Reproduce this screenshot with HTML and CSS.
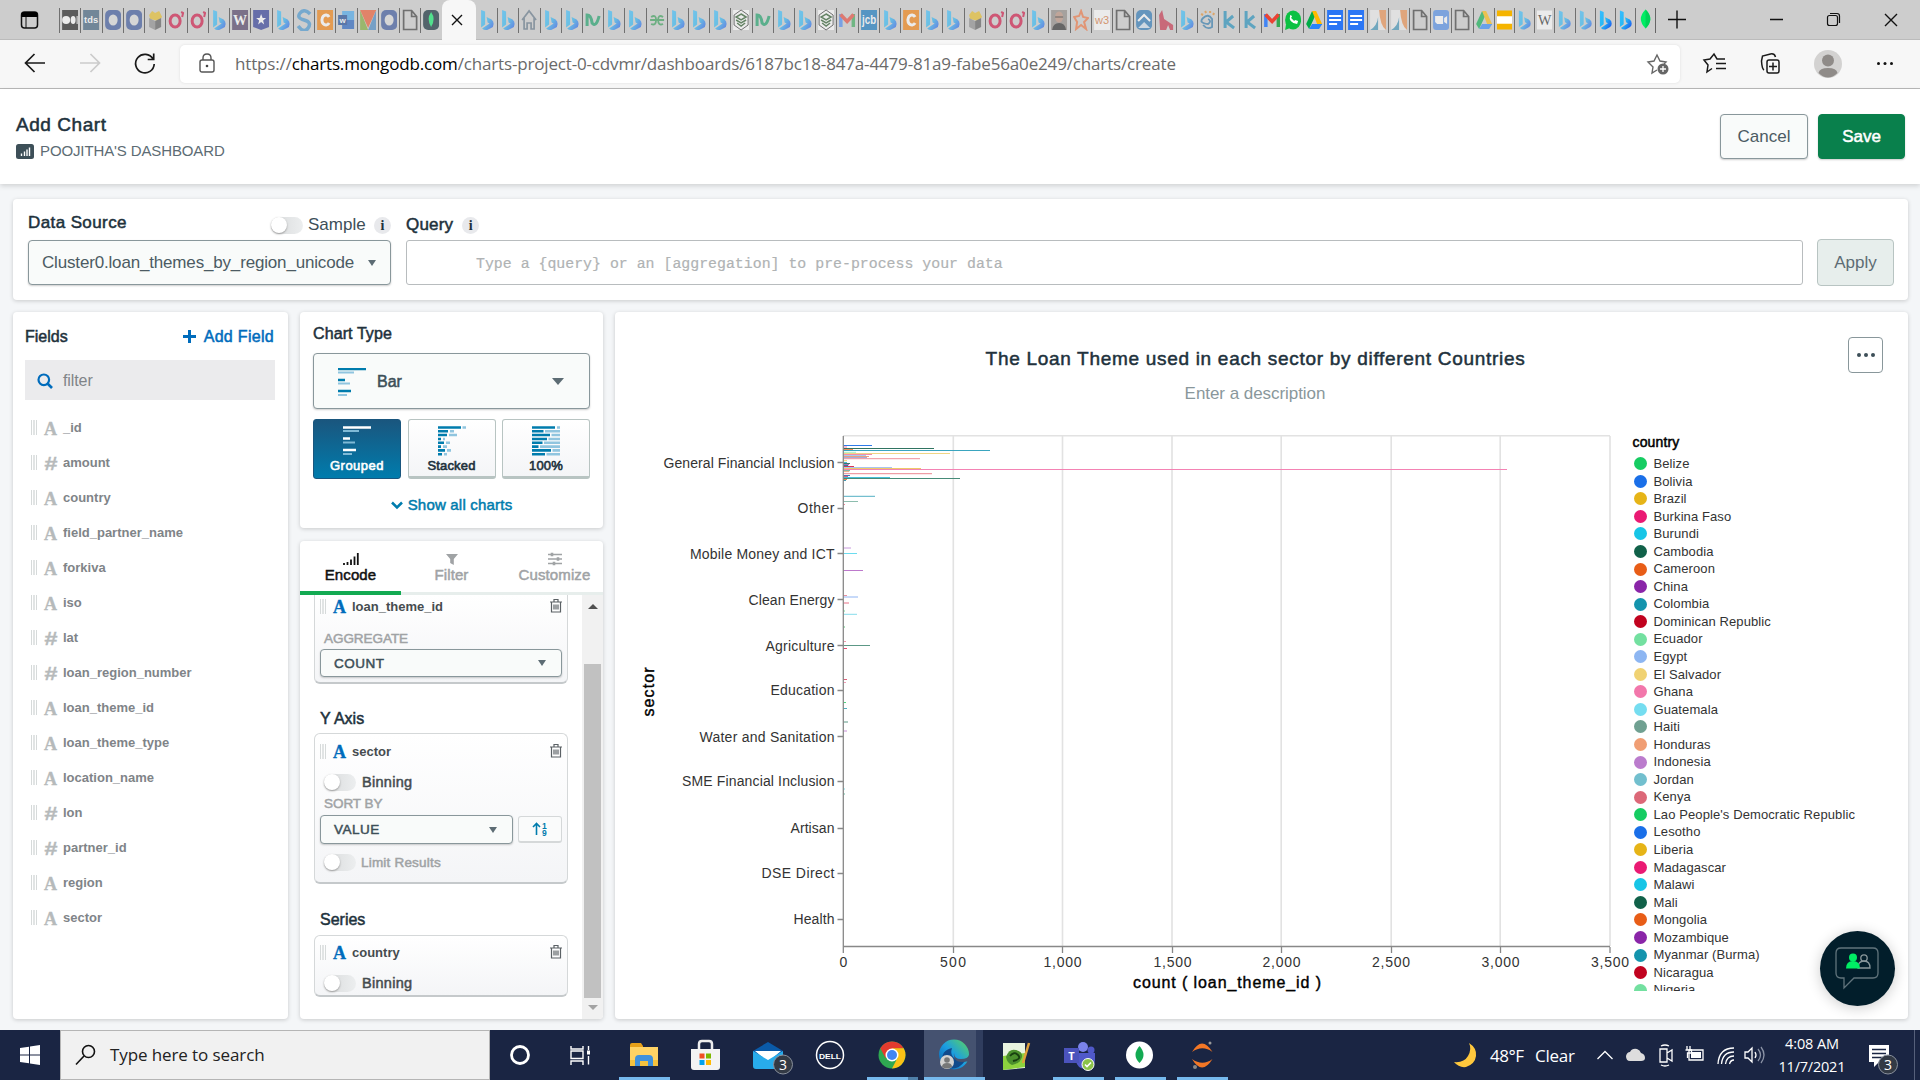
FILE: index.html
```html
<!DOCTYPE html>
<html lang="en">
<head>
<meta charset="utf-8">
<title>Add Chart</title>
<link rel="stylesheet" href="styles.css">
</head>
<body>
<svg class="defs" width="0" height="0">
  <defs>
    <linearGradient id="gb" x1="0" y1="0" x2="1" y2="1"><stop offset="0" stop-color="#37bdff"/><stop offset=".5" stop-color="#26b8f4"/><stop offset="1" stop-color="#1b48ef"/></linearGradient>
    <linearGradient id="ge" x1="0" y1="1" x2="1" y2="0"><stop offset="0" stop-color="#0c59a4"/><stop offset=".5" stop-color="#1b9de2"/><stop offset="1" stop-color="#5fd65a"/></linearGradient>
  </defs>
</svg>
<svg class="symbols" width="0" height="0">
  <symbol id="bing" viewBox="0 0 16 22"><path fill="url(#gb)" d="M2 1l4 1.500v13l-4 3zM7.500 8l5 2.500q2 1.500 2 4.500t-2.500 4l-4 2q-3 .5-5-1.500l7.500-5-2-1z"/></symbol>
  <symbol id="med" viewBox="0 0 16 22"><path fill="#111" d="M0 1h16v20H0z"/><circle cx="4" cy="11" r="4" fill="#fff"/><ellipse cx="11" cy="11" rx="2.500" ry="4" fill="#fff"/><path d="M15 7v8" stroke="#fff"/></symbol>
  <symbol id="oo" viewBox="0 0 16 22"><rect y="1" width="16" height="20" rx="5" fill="#2f4c97"/><ellipse cx="8" cy="11" rx="4.500" ry="5.500" fill="#ddd"/></symbol>
  <symbol id="box" viewBox="0 0 16 22"><path fill="#e8bd20" d="M2 6l3-4 3 2 4-2 3 6-4 4-8-2z"/><path fill="#888" d="M2 9l6 3v9l-6-3z"/><path fill="#555" d="M14 9l-6 3v9l6-3z"/></symbol>
  <symbol id="gg" viewBox="0 0 16 22"><ellipse cx="7" cy="12" rx="5" ry="6" fill="none" stroke="#cf0a3c" stroke-width="3"/><path d="M13 3l2 1-1 4" stroke="#cf0a3c" stroke-width="2" fill="none"/></symbol>
  <symbol id="star" viewBox="0 0 16 22"><path fill="#233092" d="M0 1h16v17l-8 3-8-3z"/><path fill="#fff" d="M8 5l1.500 4H13l-3 2.500 1 4-3-2.500-3 2.500 1-4L3 9h3.500z"/></symbol>
  <symbol id="ss" viewBox="0 0 16 22"><path d="M14 5Q8-1 4 4t4 7 4 8-10-2" fill="none" stroke="#3d92cf" stroke-width="3.500"/></symbol>
  <symbol id="cc" viewBox="0 0 16 22"><path fill="#f47a00" d="M0 1h16v20H0z"/><path d="M12 8a4 5 0 1 0 0 6" fill="none" stroke="#fff" stroke-width="3"/></symbol>
  <symbol id="tri" viewBox="0 0 16 22"><path fill="#79a92f" d="M0 1v20h8z"/><path fill="#3d83c2" d="M16 1v20H8z"/><path fill="#ef5327" d="M0 1h16L8 19z"/></symbol>
  <symbol id="doc" viewBox="0 0 16 22"><path d="M1.500 1.500h8l5 6v13h-13zM9.500 1.500v6h5" fill="none" stroke="#333" stroke-width="1.700"/></symbol>
  <symbol id="mdark" viewBox="0 0 16 22"><rect y="1" width="16" height="20" rx="5" fill="#021e2b"/><path d="M8 3q5 7 0 15-5-8 0-15z" fill="#00ed64"/></symbol>
  <symbol id="leaf" viewBox="0 0 16 22"><path d="M8 0q10 10 0 20-10-10 0-20z" fill="#00ed64"/><path d="M8 0q10 10 0 20z" fill="#00d157"/></symbol>
  <symbol id="home" viewBox="0 0 16 22"><path d="M1 11l7-9 7 9M3 9v11h3v-6h4v6h3V9" fill="none" stroke="#5b7083" stroke-width="1.700"/></symbol>
  <symbol id="nn" viewBox="0 0 16 22"><path d="M2 17V6q4 0 5 8 4 5 7-7" fill="none" stroke="#109c62" stroke-width="3"/></symbol>
  <symbol id="gfg" viewBox="0 0 16 22"><path d="M1 11h14M2 8q5-3 5 3t-5 4M14 8q-5-3-5 3t5 4" fill="none" stroke="#2f9c51" stroke-width="1.800"/></symbol>
  <symbol id="hex" viewBox="0 0 16 22"><path fill="#fff" d="M0 1h16v20H0z"/><path d="M8 1l7 5v10l-7 5-7-5V6z" fill="none" stroke="#333"/><path d="M8 5l5 3-5 3-5-3zM3 11l5 3 5-3M4 14l4 3 4-3" fill="none" stroke="#252" stroke-width="1.500"/></symbol>
  <symbol id="gmail" viewBox="0 0 16 22"><path fill="#4285f4" d="M0 5h3.500v13H0z"/><path fill="#34a853" d="M12.500 5H16v13h-3.500z"/><path d="M1.500 5.500l6.500 7 6.500-7" fill="none" stroke="#ea4335" stroke-width="3.500"/></symbol>
  <symbol id="man" viewBox="0 0 16 22"><path fill="#8b8580" d="M0 1h16v20H0z"/><path fill="#222" d="M1 21q1-7 7-7t7 7z"/><ellipse cx="8" cy="8" rx="4" ry="5.500" fill="#b98c78"/><path d="M4 8h8" stroke="#222"/></symbol>
  <symbol id="ost" viewBox="0 0 16 22"><path d="M8 2l2 6 5 1-4 4 2 7-5-4-5 4 1-7-3-5 5-1z" fill="none" stroke="#ef713b" stroke-width="2"/></symbol>
  <symbol id="mtn" viewBox="0 0 16 22"><rect y="1" width="16" height="20" rx="5" fill="#1f70b4"/><path d="M2 12l6-6 6 6" fill="none" stroke="#fff" stroke-width="2"/><path d="M2 19l6-6 6 6" fill="#cfe0ef"/></symbol>
  <symbol id="hh" viewBox="0 0 16 22"><path fill="#c62742" d="M1 6l3-5 2 9 9 6v5h-3l-2-5-2 5H2z"/></symbol>
  <symbol id="spi" viewBox="0 0 16 22"><path d="M3 16q4 5 9 2V10q-4-6-9-1t5 6q4-3 0-5" fill="none" stroke="#2674a9" stroke-width="1.800"/><path d="M1 5l2 1M5 2l1 2M10 2v2M14 4l-1 2" stroke="#e58b26" stroke-width="2"/></symbol>
  <symbol id="kk" viewBox="0 0 16 22"><path d="M4 2v17M12 7l-7 6 8 6" fill="none" stroke="#158ab8" stroke-width="3"/></symbol>
  <symbol id="wa" viewBox="0 0 16 22"><ellipse cx="8" cy="11" rx="8" ry="9.500" fill="#0cc143"/><path d="M0 21l1-6 4 4z" fill="#0cc143"/><path d="M5 6q-2 8 7 9l1-3-3-1-1 1-3-3 1-2z" fill="#fff"/></symbol>
  <symbol id="drive" viewBox="0 0 16 22"><path fill="#00ac47" d="M6 2L0 15l3 5L9 7z"/><path fill="#ffba00" d="M6 2h4l6 13h-5z"/><path fill="#2684fc" d="M3 20l3-5h10l-3 5z"/></symbol>
  <symbol id="docs" viewBox="0 0 16 22"><path fill="#2b76f5" d="M0 1h16v20H0z"/><path d="M2 7h12M2 11h12M2 15h8" stroke="#fff" stroke-width="2"/></symbol>
  <symbol id="sail" viewBox="0 0 16 22"><path fill="#eee" d="M0 1h16v20H0z"/><path fill="#ec8c48" d="M9 1h7v20q-6-4-7-20z"/><path fill="#358fb5" d="M0 21q7-4 8-13v13z"/></symbol>
  <symbol id="zoom" viewBox="0 0 16 22"><rect y="1" width="16" height="20" rx="3" fill="#4788e8"/><path fill="#fff" d="M2 7h8v8H4l-2-2zM11 9l3-2v8l-3-2z"/></symbol>
  <symbol id="slides" viewBox="0 0 16 22"><path fill="#f5b400" d="M0 1h16v20H0z"/><path fill="#fff" d="M0 7h16v8H0z"/></symbol>
  <symbol id="trash" viewBox="0 0 12 14"><path d="M0 3h12M4 2.500v-2h4v2M1.500 3v10h9V3M4 5.500v5M6 5.500v5M8 5.500v5" fill="none" stroke="#5b6165" stroke-width="1.200"/></symbol>
</svg>

<div class="tabstrip">
  <div class="workspaces"><svg width="20" height="20" viewBox="0 0 20 20"><rect x="1.500" y="2" width="16" height="16" rx="3" fill="none" stroke="#111" stroke-width="1.500"/><path d="M1.500 7V4q0-2 2-2h12q2 0 2 2v3z" fill="#000"/><path d="M6 7v11" stroke="#111"/></svg></div>
  <div class="tabs first">
    <svg><use href="#med"/></svg><svg viewBox="0 0 16 22"><path fill="#355876" d="M0 1h16v20H0z"/><text x="8" y="14" class="fav" font-size="9" textLength="14" lengthAdjust="spacingAndGlyphs">tds</text></svg><svg><use href="#oo"/></svg><svg><use href="#oo"/></svg><svg><use href="#box"/></svg><svg><use href="#gg"/></svg><svg><use href="#gg"/></svg><svg><use href="#bing"/></svg><svg viewBox="0 0 16 22"><path fill="#45345c" d="M0 1h16v20H0z"/><text x="8" y="16" class="fav serif" font-size="15" textLength="14" lengthAdjust="spacingAndGlyphs">W</text></svg><svg><use href="#star"/></svg><svg><use href="#bing"/></svg><svg><use href="#ss"/></svg><svg><use href="#cc"/></svg><svg viewBox="0 0 16 22"><path fill="#41a5ee" d="M4 2h12v9H4z"/><path fill="#185abd" d="M4 11h12v9H4z"/><path fill="#103f91" d="M0 6h9v10H0z"/><text x="4.500" y="14" class="fav" font-size="8">w</text></svg><svg><use href="#tri"/></svg><svg><use href="#oo"/></svg><svg><use href="#doc"/></svg><svg><use href="#mdark"/></svg>
  </div>
  <div class="active-tab"><svg width="12" height="12" viewBox="0 0 12 12"><path d="M1 1l10 10M11 1L1 11" stroke="#111" stroke-width="1.400"/></svg></div>
  <div class="tabs mid">
    <svg><use href="#bing"/></svg><svg><use href="#bing"/></svg><svg><use href="#home"/></svg><svg><use href="#bing"/></svg><svg><use href="#bing"/></svg><svg><use href="#nn"/></svg><svg><use href="#bing"/></svg><svg><use href="#bing"/></svg><svg><use href="#gfg"/></svg><svg><use href="#bing"/></svg><svg><use href="#bing"/></svg><svg><use href="#bing"/></svg><svg><use href="#hex"/></svg><svg><use href="#nn"/></svg><svg><use href="#bing"/></svg><svg><use href="#bing"/></svg><svg><use href="#hex"/></svg><svg><use href="#gmail"/></svg><svg viewBox="0 0 16 22"><path fill="#0670bd" d="M0 1h16v20H0z"/><text x="8" y="15" class="fav" font-size="12" textLength="14" lengthAdjust="spacingAndGlyphs">jcb</text></svg><svg><use href="#bing"/></svg><svg><use href="#cc"/></svg><svg><use href="#bing"/></svg><svg><use href="#bing"/></svg><svg><use href="#box"/></svg><svg><use href="#gg"/></svg><svg><use href="#gg"/></svg><svg><use href="#bing"/></svg><svg><use href="#man"/></svg><svg><use href="#ost"/></svg><svg viewBox="0 0 16 22"><path fill="#fff" d="M0 1h16v20H0z"/><text x="8" y="15" font-size="11" text-anchor="middle" fill="#d77132">w3</text></svg><svg><use href="#doc"/></svg><svg><use href="#mtn"/></svg><svg><use href="#hh"/></svg><svg><use href="#bing"/></svg><svg><use href="#spi"/></svg><svg><use href="#kk"/></svg><svg><use href="#kk"/></svg><svg class="live"><use href="#gmail"/></svg><svg class="live"><use href="#wa"/></svg><svg class="live"><use href="#drive"/></svg><svg class="live"><use href="#docs"/></svg><svg class="live"><use href="#docs"/></svg><svg><use href="#sail"/></svg><svg><use href="#sail"/></svg><svg><use href="#doc"/></svg><svg><use href="#zoom"/></svg><svg><use href="#doc"/></svg><svg><use href="#drive"/></svg>
  </div>
  <div class="tabs last">
    <svg class="live"><use href="#slides"/></svg><svg><use href="#bing"/></svg><svg viewBox="0 0 16 22"><path fill="#fff" d="M0 1h16v20H0z"/><text x="8" y="16" font-size="15" text-anchor="middle" fill="#222" class="serif">W</text></svg><svg><use href="#bing"/></svg><svg><use href="#bing"/></svg><svg class="live"><use href="#bing"/></svg><svg class="live"><use href="#bing"/></svg><svg class="live"><use href="#leaf"/></svg>
  </div>
  <svg class="winctl" width="265" height="40" viewBox="1655 0 265 40"><path d="M1655.500 8v25" stroke="#666"/><path d="M1668 19.500h18M1677 10.500v18M1770 19.500h13M1885 14l12 12M1897 14l-12 12" stroke="#111" stroke-width="1.400"/><rect x="1827.500" y="15.500" width="10" height="10" rx="2" fill="none" stroke="#111" stroke-width="1.200"/><path d="M1830 13.500h7q2.500 0 2.500 2.500v7" fill="none" stroke="#111" stroke-width="1.200"/></svg>
</div>

<div class="toolbar">
  <svg width="180" height="48" viewBox="0 40 180 48" fill="none" stroke="#1a1a1a" stroke-width="1.700"><path d="M45 63H25.500M34.500 54l-9 9 9 9"/><path stroke="#cbcbcb" d="M80 63h19.500M90.500 54l9 9-9 9"/><path d="M153 59a9.300 9.300 0 1 0 1.200 5M153.700 53.500v6h-6"/></svg>
  <div class="urlbar">
    <svg width="17" height="22" viewBox="0 0 17 22"><rect x="1" y="7" width="14" height="12" rx="2" fill="none" stroke="#555" stroke-width="1.400"/><path d="M4 7V5q0-4 4-4t4 4v2" fill="none" stroke="#555" stroke-width="1.400"/><circle cx="8" cy="13" r="1.300" fill="#444"/></svg>
    <span class="url">https://<b>charts.mongodb.com</b>/charts-project-0-cdvmr/dashboards/6187bc18-847a-4479-81a9-fabe56a0e249/charts/create</span>
    <svg width="24" height="22" viewBox="0 0 24 22"><path d="M12 17l-5 3 1-6-5-5 6-1 3-6 3 6 6 1-2 2" fill="none" stroke="#666" stroke-width="1.400"/><circle cx="18" cy="16" r="5.500" fill="#666"/><path d="M15 16h6M18 13v6" stroke="#fff" stroke-width="1.300"/></svg>
  </div>
  <svg width="240" height="48" viewBox="1680 40 240 48" fill="none" stroke="#1a1a1a" stroke-width="1.500"><path d="M1712 68.500l-5 3.500 1-7-4-5 6-1 4-5 3 5h8M1716 63.500h10M1716 68.500h10"/><rect x="1767" y="60" width="12" height="13" rx="2"/><path d="M1773 62.500v8M1769 66.500h8M1764 70q-2-1-2.500-9l1-5 8-2q4-1 5 3"/><circle cx="1828" cy="64" r="14" fill="#d3d2d1" stroke="none"/><circle cx="1828" cy="60.500" r="6" fill="#8f8b88" stroke="none"/><path d="M1818.500 73q1-5 9.500-5t9.500 5q-9.500 9-19 0" fill="#8f8b88" stroke="none"/><g fill="#111" stroke="none"><circle cx="1878.500" cy="63.500" r="1.500"/><circle cx="1885" cy="63.500" r="1.500"/><circle cx="1891.500" cy="63.500" r="1.500"/></g></svg>
</div>

<header class="apphead">
  <div>
    <h1>Add Chart</h1>
    <div class="crumb"><svg width="18" height="15" viewBox="0 0 18 15"><rect width="18" height="15" rx="2.500" fill="#3d4f58"/><path d="M5.500 9.500V12M8.500 7.500V12M11 5.500V12M13.500 3.500V12" stroke="#fff" stroke-width="1.400"/></svg><span>POOJITHA'S DASHBOARD</span></div>
  </div>
  <div class="actions"><button class="btn">Cancel</button><button class="btn save">Save</button></div>
</header>

<main>
  <section class="panel query">
    <div class="source">
      <div class="labelrow"><span class="lbl ds">Data Source</span><span class="toggle"></span><span class="sample">Sample</span><span class="info">i</span></div>
      <div class="select big"><span>Cluster0.loan_themes_by_region_unicode</span><i class="caret"></i></div>
    </div>
    <div class="qbox">
      <div class="labelrow"><span class="lbl">Query</span><span class="info qi">i</span></div>
      <div class="qinput">Type a {query} or an [aggregation] to pre-process your data</div>
    </div>
    <button class="btn apply">Apply</button>
  </section>

  <div class="columns">
    <section class="panel fields">
      <div class="fhead"><span>Fields</span><a><svg width="13" height="13" viewBox="0 0 13 13"><path d="M6.500 0v13M0 6.500h13" stroke="#006cbc" stroke-width="3"/></svg>Add Field</a></div>
      <div class="filter"><svg width="16" height="16" viewBox="0 0 16 16"><circle cx="6.800" cy="6.800" r="5.300" fill="none" stroke="#006cbc" stroke-width="2.200"/><path d="M10.500 10.500l4.500 4.500" stroke="#006cbc" stroke-width="2.600"/></svg><span>filter</span></div>
      <ul>
        <li><i class="grip"></i><em>A</em><span>_id</span></li>
        <li><i class="grip"></i><em class="num">#</em><span>amount</span></li>
        <li><i class="grip"></i><em>A</em><span>country</span></li>
        <li><i class="grip"></i><em>A</em><span>field_partner_name</span></li>
        <li><i class="grip"></i><em>A</em><span>forkiva</span></li>
        <li><i class="grip"></i><em>A</em><span>iso</span></li>
        <li><i class="grip"></i><em class="num">#</em><span>lat</span></li>
        <li><i class="grip"></i><em class="num">#</em><span>loan_region_number</span></li>
        <li><i class="grip"></i><em>A</em><span>loan_theme_id</span></li>
        <li><i class="grip"></i><em>A</em><span>loan_theme_type</span></li>
        <li><i class="grip"></i><em>A</em><span>location_name</span></li>
        <li><i class="grip"></i><em class="num">#</em><span>lon</span></li>
        <li><i class="grip"></i><em class="num">#</em><span>partner_id</span></li>
        <li><i class="grip"></i><em>A</em><span>region</span></li>
        <li><i class="grip"></i><em>A</em><span>sector</span></li>
      </ul>
    </section>

    <div class="midcol">
      <section class="panel ctype">
        <h2>Chart Type</h2>
        <div class="select bar"><svg width="28" height="28" viewBox="0 0 28 28"><path d="M0 1h28M0 12h7M0 23h13" stroke="#007cad" stroke-width="2.500"/><path d="M0 4.500h16M0 15.500h12M0 27h9" stroke="#90c5df" stroke-width="2.200"/></svg><span>Bar</span><i class="caret wide"></i></div>
        <div class="variants">
          <div class="variant on"><svg width="28" height="30" viewBox="0 0 28 30"><path d="M0 1.500h28M0 12.500h7M0 24h13" stroke="#fff" stroke-width="2.600"/><path d="M0 5h16M0 16.500h12M0 28h9" stroke="#7fbad6" stroke-width="2.200"/></svg><span>Grouped</span></div>
          <div class="variant"><svg width="28" height="30" viewBox="0 0 28 30"><path d="M0 1.500h23M0 5.200h10M0 9h9M0 13h3M0 16.800h6M0 20.600h3M0 24.400h7M0 28.200h4" stroke="#007cad" stroke-width="2.600"/><path d="M24.500 1.500h3.500M12 5.200h4M11 9h8M5 13h2M8 16.800h4M5 20.600h4M9 24.400h4M6 28.200h3" stroke="#90c5df" stroke-width="2.600"/></svg><span>Stacked</span></div>
          <div class="variant"><svg width="28" height="30" viewBox="0 0 28 30"><path d="M25 1.500h3M13 5.200h15M19.500 9H28M16.500 13H28M12 16.800h16M8 20.600h20M20.500 24.400H28M14.500 28.200H28" stroke="#90c5df" stroke-width="2.600"/><path d="M0 1.500h23M0 5.200h11.500M0 9h18M0 13h15M0 16.800h10.500M0 20.600h6.500M0 24.400h19M0 28.200h13" stroke="#007cad" stroke-width="2.600"/></svg><span>100%</span></div>
        </div>
        <div class="showall"><svg width="12" height="9" viewBox="0 0 12 9"><path d="M1 1.500l5 5 5-5" fill="none" stroke="#007cad" stroke-width="2.500"/></svg>Show all charts</div>
      </section>

      <section class="panel encode">
        <div class="etabs">
          <div class="etab on"><svg width="16" height="14" viewBox="0 0 16 14"><path d="M1 11v2M4.500 10v3M8 7.500V13M11.500 4.500V13M14.800 1v12" stroke="#111" stroke-width="1.800"/></svg><span>Encode</span></div>
          <div class="etab"><svg width="14" height="14" viewBox="0 0 14 14"><path d="M1 2h12L8.800 7v6L5.200 11V7z" fill="#a0a3a5"/></svg><span>Filter</span></div>
          <div class="etab"><svg width="14" height="14" viewBox="0 0 14 14"><path d="M0 2.500h14M0 7h14M0 11.500h14" stroke="#a0a3a5" stroke-width="1.400"/><path d="M4 .8v3.400M10 5.300v3.400M6 9.800v3.400" stroke="#a0a3a5" stroke-width="2.600"/></svg><span>Customize</span></div>
        </div>
        <div class="ebody">
          <div class="elist">
            <div class="card c1">
              <div class="chead"><i class="grip"></i><em>A</em><span>loan_theme_id</span><svg width="12" height="14"><use href="#trash"/></svg></div>
              <div class="cap">AGGREGATE</div>
              <div class="select small"><span>COUNT</span><i class="caret"></i></div>
            </div>
            <h3>Y Axis</h3>
            <div class="card c2">
              <div class="chead"><i class="grip"></i><em>A</em><span>sector</span><svg width="12" height="14"><use href="#trash"/></svg></div>
              <div class="trow"><span class="toggle"></span>Binning</div>
              <div class="cap">SORT BY</div>
              <div class="srow"><div class="select small"><span>VALUE</span><i class="caret"></i></div><div class="sortbtn"><svg width="16" height="14" viewBox="0 0 16 14"><path d="M4.500 13V1.500M1 5l3.500-3.500L8 5" fill="none" stroke="#007cad" stroke-width="1.600"/><text x="10" y="6.500" font-size="8.500">1</text><text x="10" y="13.500" font-size="8.500">9</text></svg></div></div>
              <div class="trow dim"><span class="toggle"></span>Limit Results</div>
            </div>
            <h3 class="h-series">Series</h3>
            <div class="card c3">
              <div class="chead"><i class="grip"></i><em>A</em><span>country</span><svg width="12" height="14"><use href="#trash"/></svg></div>
              <div class="trow"><span class="toggle"></span>Binning</div>
            </div>
          </div>
          <div class="scrollbar"><i class="up"></i><b></b><i class="down"></i></div>
        </div>
      </section>
    </div>

    <section class="panel chart">
      <div class="more"><i></i><i></i><i></i></div>
      <div class="ctitle">The Loan Theme used in each sector by different Countries</div>
      <div class="cdesc">Enter a description</div>
      <div class="plot">
        <svg width="992" height="570" viewBox="640 430 992 570">
          <path d="M953.300 436v510M1062.500 436v510M1172 436v510M1281.200 436v510M1391.200 436v510M1500.200 436v510M1610 436v510M843 435.800h767" stroke="#e2e2e2" stroke-width="1.600" fill="none"/>
          <g stroke-width="1" fill="none">
            <path stroke="#2e7be8" d="M843 445.500h29"/><path stroke="#f277a8" d="M843 447h4"/><path stroke="#2f7462" d="M843 448.500h91"/><path stroke="#ee8c5a" d="M843 449.500h10"/><path stroke="#3aa5bf" d="M843 450.500h147"/><path stroke="#a5ecc4" d="M843 452.300h13"/><path stroke="#f0d685" d="M843 453.500h107"/><path stroke="#f08db0" d="M843 454.500h29"/><path stroke="#a6cdee" d="M843 455.500h23"/><path stroke="#ef9d7b" d="M843 456.500h26"/><path stroke="#8f9ad0" d="M843 457.700h24"/><path stroke="#ef909b" d="M843 458.700h77"/>
            <path stroke="#f2cf68" d="M843 460.700h4"/><path stroke="#46bcd8" d="M843 462.500h4"/><path stroke="#3d7768" d="M843 463.500h7"/><path stroke="#9650b0" d="M843 464.700h6"/><path stroke="#21899c" d="M843 465.500h5"/><path stroke="#d83455" d="M843 466.500h11"/><path stroke="#a9c4f0" d="M843 467.500h49"/><path stroke="#edc869" d="M843 468.500h78"/><path stroke="#f483b4" d="M843 469.500h664"/><path stroke="#69a594" d="M843 470.700h7"/><path stroke="#f2ac87" d="M843 471.600h6"/><path stroke="#ea8791" d="M843 473.700h89"/><path stroke="#4c76b8" d="M843 475.500h7"/><path stroke="#df3862" d="M843 476.700h5"/><path stroke="#35b9d5" d="M843 477.600h47"/><path stroke="#468b78" d="M843 478.500h117"/><path stroke="#e6864f" d="M843 479.500h4"/><path stroke="#4497b1" d="M843 480.500h3"/>
            <path stroke="#53b0c4" d="M843 496.300h32"/><path stroke="#8dbdae" d="M843 501.500h15"/><path stroke="#f0879a" d="M843 504.500h2"/><path stroke="#c89add" d="M843 548h8"/><path stroke="#6bdcef" d="M843 553.500h14"/><path stroke="#bd79cc" d="M843 570.500h20"/><path stroke="#e991a1" d="M843 595.500h4"/><path stroke="#8fb4f3" d="M843 597h15"/><path stroke="#e87187" d="M843 603h6"/><path stroke="#72dd97" d="M843 611h2"/><path stroke="#86ddeb" d="M843 614.300h14"/><path stroke="#58c878" d="M843 627h2"/><path stroke="#ef9cad" d="M843 641.500h3"/><path stroke="#5c9886" d="M843 645.500h27"/><path stroke="#e14e70" d="M843 648.500h4"/><path stroke="#dc6078" d="M843 679.500h4"/><path stroke="#f29fb7" d="M843 682.500h3"/><path stroke="#51d580" d="M843 702.500h3"/><path stroke="#51aebf" d="M843 708.500h4"/><path stroke="#5c9886" d="M843 722h5"/><path stroke="#c990d8" d="M843 731h4"/><path stroke="#79dde9" d="M843 789h2"/><path stroke="#69bda0" d="M843 794h2"/>
          </g>
          <path d="M843.300 436v517M843 946.500h767M837.500 462.500h6M837.500 508.500h6M837.500 553.500h6M837.500 599.500h6M837.500 645.500h6M837.500 690.500h6M837.500 736.500h6M837.500 781.500h6M837.500 828.500h6M837.500 873.500h6M837.500 919.500h6M953.500 947v6M1062.500 947v6M1172.500 947v6M1281.500 947v6M1391.500 947v6M1500.500 947v6M1610 947v6" stroke="#888" stroke-width="1.300" fill="none"/>
          <g class="axis" text-anchor="end">
            <text x="834.500" y="468" textLength="171">General Financial Inclusion</text><text x="834.500" y="513" textLength="37">Other</text><text x="834.500" y="559" textLength="144.500">Mobile Money and ICT</text><text x="834.500" y="604.500" textLength="86">Clean Energy</text><text x="834.500" y="650.500" textLength="69">Agriculture</text><text x="834.500" y="695" textLength="64">Education</text><text x="834.500" y="741.500" textLength="135">Water and Sanitation</text><text x="834.500" y="786" textLength="152.500">SME Financial Inclusion</text><text x="834.500" y="832.500" textLength="44">Artisan</text><text x="834.500" y="877.500" textLength="73">DSE Direct</text><text x="834.500" y="924" textLength="41">Health</text>
          </g>
          <g class="axis" text-anchor="middle">
            <text x="843.500" y="967">0</text><text x="953" y="967" textLength="26">500</text><text x="1062.500" y="967" textLength="38">1,000</text><text x="1172.500" y="967" textLength="38">1,500</text><text x="1281.500" y="967" textLength="38">2,000</text><text x="1391" y="967" textLength="38">2,500</text><text x="1500.500" y="967" textLength="38">3,000</text><text x="1610" y="967" textLength="38">3,500</text>
          </g>
          <text class="atitle" x="1227" y="988" text-anchor="middle" textLength="188">count ( loan_theme_id )</text>
          <text class="atitle" transform="translate(654 692) rotate(-90)" text-anchor="middle" textLength="49">sector</text>
        </svg>
        <div class="legend">
          <h4>country</h4>
          <ul>
            <li class="k0">Belize</li><li class="k1">Bolivia</li><li class="k2">Brazil</li><li class="k3">Burkina Faso</li><li class="k4">Burundi</li><li class="k5">Cambodia</li><li class="k6">Cameroon</li><li class="k7">China</li><li class="k8">Colombia</li><li class="k9">Dominican Republic</li><li class="k10">Ecuador</li><li class="k11">Egypt</li><li class="k12">El Salvador</li><li class="k13">Ghana</li><li class="k14">Guatemala</li><li class="k15">Haiti</li><li class="k16">Honduras</li><li class="k17">Indonesia</li><li class="k18">Jordan</li><li class="k19">Kenya</li><li class="k0">Lao People's Democratic Republic</li><li class="k1">Lesotho</li><li class="k2">Liberia</li><li class="k3">Madagascar</li><li class="k4">Malawi</li><li class="k5">Mali</li><li class="k6">Mongolia</li><li class="k7">Mozambique</li><li class="k8">Myanmar (Burma)</li><li class="k9">Nicaragua</li><li class="k10">Nigeria</li>
          </ul>
        </div>
      </div>
    </section>
  </div>
  <div class="chat"><svg width="46" height="46" viewBox="0 0 46 46"><path d="M7 3h32q5 0 5 5v20q0 5-5 5H20L10 43V33H7q-5 0-5-5V8q0-5 5-5z" fill="none" stroke="#61747c" stroke-width="1.300"/><path d="M24 23q0-7 6-7t6 7z" fill="none" stroke="#89979b" stroke-width="1.300"/><circle cx="30" cy="13" r="3.200" fill="none" stroke="#89979b" stroke-width="1.300"/><path d="M12 23.500q0-7.500 7-7.500t7 7.500z" fill="#00ed64"/><circle cx="19" cy="12.500" r="4" fill="#00ed64"/></svg></div>
</main>

<footer class="taskbar">
  <div class="start"><svg width="20" height="20" viewBox="0 0 20 20"><path fill="#fff" d="M0 3l9-1.300V9.500H0zM10 1.500L20 0v9.500H10zM0 10.500h9v7.800L0 17zM10 10.500h10V20l-10-1.500z"/></svg></div>
  <div class="search"><svg width="22" height="22" viewBox="0 0 22 22"><circle cx="13.500" cy="7.500" r="6" fill="none" stroke="#111" stroke-width="1.600"/><path d="M9 12l-8 8.500" stroke="#111" stroke-width="1.600"/></svg><span>Type here to search</span></div>
  <svg width="1430" height="50" viewBox="490 1030 1430 50">
    <circle cx="520" cy="1055" r="8.500" fill="none" stroke="#fff" stroke-width="2.800"/>
    <path d="M571 1046v3h12v-3M571 1065v-4h12v4M571 1051h12v7.500h-12zM588.500 1046v4M588.500 1056v8.500" fill="none" stroke="#fff" stroke-width="1.400"/><path d="M587 1050.500h3v4h-3z" fill="#fff"/>
    <path fill="#e6a019" d="M630 1045q0-2 2-2h9l2 3h0v4h-13z"/><path fill="#ffd365" d="M630 1047h28v18h-28z"/><path fill="#f5c23e" d="M630 1060h28v6h-28z"/><path fill="#3f91dc" d="M635 1066v-7q0-4 4-4h10q4 0 4 4v7h-5v-5h-8v5z"/>
    <path d="M699 1049v-5q0-3 3-3h7q3 0 3 3v5" fill="none" stroke="#eee" stroke-width="2.500"/><path fill="#f3f3f3" d="M691 1049h29v18q0 3-3 3h-23q-3 0-3-3z"/><path fill="#f04f23" d="M699.500 1053.500h5v5h-5z"/><path fill="#7eb800" d="M706 1053.500h5v5h-5z"/><path fill="#00a2ed" d="M699.500 1060h5v5h-5z"/><path fill="#ffb901" d="M706 1060h5v5h-5z"/>
    <path fill="#0a5aa8" d="M753 1051l15-9 15 9v8h-30z"/><path fill="#fff" d="M755 1051h26l-13 11z"/><path fill="#28aceb" d="M753 1051l15 9 15-9v15q0 3-3 3h-24q-3 0-3-3z"/><path fill="#fff" d="M757 1051h22l-11 8z"/><circle cx="783" cy="1064.500" r="9.500" fill="#333a45" stroke="#8a919d"/><text x="783" y="1070" class="bdg">3</text>
    <circle cx="830" cy="1055" r="13.500" fill="none" stroke="#fff" stroke-width="1.500"/><text x="830" y="1058.500" class="dell" textLength="22" lengthAdjust="spacingAndGlyphs">DELL</text>
    <circle cx="892" cy="1055" r="13.500" fill="#2fa851"/><path fill="#e33b2e" d="M880.300 1048.300A13.500 13.500 0 0 1 903.700 1048.300L892 1049l-6.500 9z"/><path fill="#fbc116" d="M903.700 1048.300A13.500 13.500 0 0 1 892 1068.500l6-11.500-6-8.700z"/><circle cx="892" cy="1055" r="6.500" fill="#fff"/><circle cx="892" cy="1055" r="5" fill="#4285f4"/>
    <path fill="#455270" d="M924 1030h52v50h-52z"/><path fill="#303d5e" d="M976 1030h7v50h-7z"/>
    <circle cx="954" cy="1054.500" r="15" fill="url(#ge)"/><path fill="#114a8b" d="M942 1062q-1-12 10-14-4 12 13 13 -8 11-19 6z"/><path fill="#455270" d="M954 1053q0 6 7 6t8-4v6q-8 2-12 0-4-3-3-8z"/><circle cx="947" cy="1062" r="7" fill="#d3d2d1"/><circle cx="947" cy="1060" r="2.800" fill="#777"/><path fill="#777" d="M942 1067q0-4 5-4t5 4q-5 3-10 0z"/>
    <path fill="#e9f4e0" d="M1003 1043h22v25l-22 2z"/><path fill="#8cd23e" d="M1003 1056l22-3v14l-22 3z"/><path fill="#4b8f2d" d="M1006 1057q3-9 10-7 7 2 6 7-2 7-10 8-5-2-6-8z"/><path d="M1010 1056q4-5 8-1t-5 6" fill="none" stroke="#183f10" stroke-width="1.800"/><path d="M1029 1043l-6 20" stroke="#e0a13a" stroke-width="2.500"/>
    <circle cx="1083" cy="1047" r="5" fill="#7b83eb"/><circle cx="1091" cy="1050" r="3.500" fill="#5059c9"/><path fill="#5059c9" d="M1076 1053h19v7q0 8-10 9-8-1-9-8z"/><path fill="#4b53bc" d="M1064 1048h15v15h-15z"/><text x="1071.500" y="1060" class="bdg tm">T</text><circle cx="1088" cy="1064.500" r="6" fill="#8bc34a" stroke="#fff"/><path d="M1085 1064.500l2 2 4-4" fill="none" stroke="#fff" stroke-width="1.600"/>
    <circle cx="1139.500" cy="1055" r="13.500" fill="#fff"/><path fill="#13aa52" d="M1139.500 1046q8 9 0 17-8-8 0-17z"/>
    <path fill="#f37726" d="M1192 1052q10-17 20.500 0-10-7.500-20.500 0M1192 1059q10 17 20.500 0-10 7.500-20.500 0"/><circle cx="1210" cy="1043" r="1.500" fill="#999"/><circle cx="1195" cy="1067" r="2" fill="#888"/>
    <path fill="#76b9ed" d="M619 1077h51v3h-51zM867 1077h41v3h-41zM924 1077h61v3h-61zM1053 1077h51v3h-51zM1115 1077h51v3h-51zM1177 1077h51v3h-51z"/><path fill="#4f7fa8" d="M908 1077h10v3h-10z"/>
    <path fill="#ffc83d" d="M1469 1043q8 5 7 13t-10 11q-7 1-12-5 10 1 14-6t1-13z"/>
    <text x="1490" y="1062" class="sys" font-size="17" textLength="34">48°F</text><text x="1535" y="1062" class="sys" font-size="17" textLength="40">Clear</text>
    <g fill="none" stroke="#fff" stroke-width="1.300"><path d="M1597.500 1059l7.500-7.500 7.500 7.500"/><path d="M1660 1049h7v13h-7zM1667 1053l5-3v11l-5-3M1661 1046q4-2 8 0M1661 1065q4 2 8 0"/><path d="M1689 1050h14v10h-14z" /><path d="M1687 1046v4M1690 1046v4M1685.500 1050h6v3h-4v5"/><path d="M1718 1064q1-16 16-16M1721.500 1064q1-12 12.500-12M1725.500 1064q1-8 8.500-8M1729.500 1064q1-4 4.500-4"/><path d="M1745 1052h3l4-4v14l-4-4h-3zM1755 1052q2 3 0 6"/><path stroke="#8b93a6" d="M1758 1049q5 6 0 12M1761 1047q6 8 0 16"/></g><path fill="#fff" d="M1691 1052h10v6h-10z"/><path fill="#ddd" d="M1626 1056q1-4 4-4 2-4 7-3 3 1 4 4 4 1 4 5 0 3-4 3h-11q-4 0-4-5z"/>
    <text x="1812" y="1048.500" class="sys" font-size="14.500" text-anchor="middle" textLength="54">4:08 AM</text><text x="1812" y="1071.500" class="sys" font-size="14.500" text-anchor="middle" textLength="67">11/7/2021</text>
    <path fill="#fff" d="M1869 1045h20v17h-10l-5 5v-5h-5z"/><path d="M1872 1049.500h14M1872 1053.500h14M1872 1057.500h10" stroke="#1a2543" stroke-width="1.300"/><circle cx="1888" cy="1064.500" r="9.500" fill="#333a45" stroke="#8a919d"/><text x="1888" y="1070" class="bdg">3</text><path d="M1914.500 1030v50" stroke="#56607a"/>
  </svg>
</footer>
</body>
</html>
```
FILE: styles.css
```css
* { box-sizing: border-box; }
body { margin: 0; width: 1920px; height: 1080px; overflow: hidden; display: flex; flex-direction: column; background: #f4f6f8; font-family: "Liberation Sans", Arial, sans-serif; color: #21313c; }
h1, h2, h3, h4, ul { margin: 0; padding: 0; font-weight: normal; list-style: none; }
svg { display: block; flex: none; }
.defs { position: absolute; }
.symbols { display: none; }
.fav { fill: #fff; text-anchor: middle; font-weight: bold; }
.serif { font-family: "Liberation Serif", serif; }

/* browser chrome */
.tabstrip { flex: none; height: 40px; display: flex; background: #cdcdcd; border-bottom: 1px solid #bbb; }
.workspaces { width: 59px; padding: 10px 0 0 20px; }
.tabs { display: flex; }
.tabs svg { flex: 1; width: 0; height: 25px; margin-top: 8px; border-left: 1px solid #333; padding: 1px 2px 2px 2px; opacity: .6; }
.tabs svg.live { opacity: 1; border-left-color: #707070; }
.tabs.first { width: 382.500px; }
.tabs.mid { width: 1018px; }
.tabs.mid svg:first-child { border-left-color: transparent; }
.tabs.last { width: 161px; }
.active-tab { width: 34.500px; height: 40px; background: #f7f7f7; border-radius: 8px 8px 0 0; padding: 14px 0 0 9.500px; }
.toolbar { flex: none; height: 49px; display: flex; background: #f7f7f7; border-bottom: 1px solid #b9b9b9; }
.urlbar { width: 1500px; height: 38px; margin-top: 5px; background: #fff; border-radius: 5px; box-shadow: 0 0 3px #ddd; display: flex; align-items: center; padding: 0 11px 0 19px; }
.url { flex: 1; margin: -2px 0 0 19px; font: 17px "Open Sans", "Noto Sans", sans-serif; letter-spacing: -.16px; color: #6a6a6a; white-space: nowrap; }
.url b { font-weight: normal; color: #000; }

/* page header */
.apphead { flex: none; height: 95px; background: #fff; display: flex; justify-content: space-between; padding: 25px 15px 0 16px; box-shadow: 0 2px 5px rgba(0,0,0,.15); }
h1 { font-size: 19px; line-height: 22px; letter-spacing: .55px; -webkit-text-stroke: .5px; }
.crumb { display: flex; align-items: center; gap: 6px; margin-top: 6px; font-size: 15px; line-height: 18px; letter-spacing: -.12px; color: #5d6c74; }
.actions { display: flex; gap: 10px; }
.btn { font: 17px "Liberation Sans", sans-serif; height: 45px; width: 88px; border: 1px solid #89979b; border-radius: 4px; background: #f9fbfa; color: #4c5b63; box-shadow: 0 1px 2px rgba(0,0,0,.2); padding: 0; }
.save { width: 87px; background: #09804c; border-color: #09804c; color: #fff; -webkit-text-stroke: .5px; }

main { flex: 1; padding: 15px 12px 0 13px; display: flex; flex-direction: column; position: relative; min-height: 0; }
.panel { background: #fff; border-radius: 4px; box-shadow: 0 1px 4px rgba(0,0,0,.18); }
.query { height: 101px; flex: none; display: flex; padding: 14px 14px 0 15px; }
.source { width: 363px; margin-right: 15px; }
.qbox { width: 1397px; margin-right: 14px; }
.labelrow { display: flex; align-items: center; height: 24px; font-size: 17px; margin-bottom: 3px; }
.lbl { -webkit-text-stroke: .5px; letter-spacing: .2px; }
.ds { margin-top: -4px; width: 243px; letter-spacing: .4px; }
.toggle { flex: none; width: 32px; height: 17px; border-radius: 9px; background: linear-gradient(90deg, #d8dadb, #eceeef); display: block; }
.toggle::before { content: ""; display: block; width: 16px; height: 16px; border-radius: 50%; background: #fff; box-shadow: 0 1px 2px #999; }
.sample { margin-left: 5px; width: 66px; color: #3d4f58; }
.info { width: 17px; height: 17px; border-radius: 50%; background: #e8e9ec; text-align: center; font: bold 14px/17px "Liberation Serif", serif; }
.qi { margin-left: 9px; }
.select { display: flex; align-items: center; justify-content: space-between; border: 1px solid #89979b; border-radius: 4px; background: #f9fbfa; box-shadow: 0 1px 2px rgba(0,0,0,.2); color: #3d4f58; }
.big { height: 45px; padding: 0 14px 0 13px; font-size: 17px; letter-spacing: -.17px; color: #4c5b63; white-space: nowrap; }
.caret { flex: none; border: 4.500px solid transparent; border-top: 6px solid #5d6c74; border-bottom: 0; }
.wide { border-width: 7px 6px 0; }
.qinput { height: 45px; border: 1px solid #b8bcbe; border-radius: 3px; padding-left: 69px; font: 14.880px/46px "Liberation Mono", monospace; color: #b0b3b4; -webkit-text-stroke: .2px; }
.apply { width: 77px; height: 47px; margin-top: 26px; background: #e7eeec; border-color: #b8c4c2; color: #5d6c74; box-shadow: none; }

.columns { display: flex; gap: 12px; margin-top: 12px; height: 707px; }
.fields { width: 275px; padding: 12px 13px 0 12px; }
.fhead { display: flex; justify-content: space-between; align-items: center; height: 24px; font-size: 16px; line-height: 24px; padding: 1px 1px 0 0; -webkit-text-stroke: .5px; }
.fhead a { display: flex; align-items: center; gap: 8px; color: #006cbc; letter-spacing: .3px; }
.filter { height: 40px; margin-top: 12px; background: #ebebed; display: flex; align-items: center; gap: 10px; padding: 1px 0 0 12px; font-size: 16px; letter-spacing: -.1px; color: #808488; }
.fields ul { margin-top: 10px; }
.fields li { height: 35px; display: flex; align-items: center; padding-left: 6px; font-size: 13px; font-weight: bold; color: #808488; }
.grip { width: 6px; height: 15px; border: solid #d6dada; border-width: 0 1px; background: linear-gradient(90deg, transparent 1px, #e1e4e4 1px, #e1e4e4 3px, transparent 3px); }
em { font: bold 18px/18px "Liberation Serif", serif; width: 15px; margin: 3px 5px 0 6px; text-align: center; color: #b6babb; -webkit-text-stroke: .3px; }
em.num { font: italic bold 19px/18px "Liberation Sans", sans-serif; transform: scaleX(1.25); }

.midcol { display: flex; flex-direction: column; gap: 13px; width: 303px; }
.ctype { height: 216px; padding: 10px 13px 0; }
h2 { font-size: 16px; line-height: 24px; letter-spacing: .1px; -webkit-text-stroke: .5px; }
.bar { height: 56px; margin-top: 7px; padding: 1px 25px 0 24px; font-size: 16px; }
.bar span { flex: 1; margin-left: 11px; -webkit-text-stroke: .5px; }
.variants { display: flex; justify-content: space-between; margin-top: 10px; }
.variant { width: 88px; height: 60px; border: 1px solid #b8c4c2; border-bottom-width: 3px; border-radius: 3px; background: linear-gradient(#fff, #f4f5f7); display: flex; flex-direction: column; align-items: center; padding-top: 6px; font-size: 13px; letter-spacing: .15px; -webkit-text-stroke: .6px; }
.variant svg { margin-bottom: 2px; }
.variant.on { color: #fff; background: linear-gradient(#1a567e, #007cad); border-color: #1a567e; border-width: 1px; letter-spacing: .5px; }
.showall { display: flex; justify-content: center; align-items: center; gap: 5px; margin-top: 16px; font-size: 15px; line-height: 20px; letter-spacing: .2px; color: #007cad; -webkit-text-stroke: .5px; }

.encode { height: 478px; display: flex; flex-direction: column; overflow: hidden; }
.etabs { display: grid; grid-template-columns: repeat(3, 1fr); height: 54px; border-bottom: 3px solid #e7eeec; flex: none; }
.etab { display: flex; flex-direction: column; align-items: center; height: 54px; padding-top: 11px; font-size: 15px; line-height: 18px; color: #a0a3a5; -webkit-text-stroke: .5px; letter-spacing: .1px; }
.etab.on { color: #111; border-bottom: 4px solid #13aa52; }
.etab:last-child { padding-left: 4px; }
.ebody { flex: 1; display: flex; min-height: 0; overflow: hidden; }
.elist { width: 282px; padding-left: 14px; }
.card { width: 254px; border: 1px solid #d5d8d9; border-bottom: 2px solid #c5c9cb; border-radius: 6px; background: linear-gradient(#fff, #f4f5f7); padding: 0 5px; color: #3d4f58; }
.chead { display: flex; align-items: center; font-size: 13px; font-weight: bold; height: 22px; }
.chead span { flex: 1; color: #464c4f; }
.chead em { color: #006cbc; margin-top: 1px; }
.cap { font-size: 13.500px; line-height: 16px; padding-left: 4px; color: #a0a3a5; -webkit-text-stroke: .5px; letter-spacing: -.05px; }
.small { height: 28px; padding: 0 15px 0 13px; font-size: 13.500px; letter-spacing: .5px; -webkit-text-stroke: .5px; }
.c1 { height: 89px; border-top: 0; border-radius: 0 0 6px 6px; }
.c1 .cap { margin-top: 14px; margin-bottom: 2px; }
h3 { font-size: 16px; line-height: 20px; padding-left: 6px; margin: 25px 0 4px; -webkit-text-stroke: .5px; }
.c2 { height: 151px; padding-top: 6px; }
.trow { display: flex; align-items: center; gap: 6px; height: 20px; margin: 10px 0 0 4px; font-size: 14.500px; letter-spacing: .3px; color: #464c4f; -webkit-text-stroke: .5px; }
.c2 .cap { margin: 4px 0 3px; }
.srow { display: flex; gap: 5px; }
.srow .select { width: 193px; height: 29px; }
.sortbtn { width: 44px; height: 27px; margin-top: 1px; border: 1px solid #d5d8d9; border-bottom-width: 2px; border-radius: 3px; background: #fafbfb; display: flex; align-items: center; justify-content: center; }
.sortbtn text { fill: #007cad; font-weight: bold; }
.dim { color: #a0a3a5; font-size: 13.500px; gap: 5px; letter-spacing: .2px; }
.c2 .dim { margin-top: 8px; }
.h-series { margin: 26px 0 5px; }
.c3 { height: 62px; padding-top: 5px; }
.scrollbar { width: 21px; background: #f1f1f1; display: flex; flex-direction: column; align-items: center; padding: 9px 0; }
.scrollbar b { width: 17px; height: 334px; margin: 55px 0 7px; background: #c1c1c1; }
.up { border: 5px solid transparent; border-top: 0; border-bottom-color: #505050; }
.down { border: 5px solid transparent; border-bottom: 0; border-top-color: #a3a3a3; }

.chart { width: 1293px; position: relative; display: flex; flex-direction: column; align-items: center; padding-top: 35px; }
.more { position: absolute; right: 25px; top: 25px; width: 35px; height: 36px; border: 1px solid #89979b; border-radius: 4px; display: flex; gap: 3px; align-items: center; justify-content: center; }
.more i { width: 4px; height: 4px; border-radius: 50%; background: #3d4f58; }
.ctitle { font-size: 19px; line-height: 24px; letter-spacing: .7px; margin-left: -12px; -webkit-text-stroke: .5px; }
.cdesc { font-size: 17px; line-height: 24px; margin: 11px 0 0 -13px; color: #89979b; letter-spacing: -.05px; }
.plot { display: flex; width: 1243px; margin-top: 24px; }
.axis { font-size: 14px; fill: #333; }
.atitle { font-size: 16px; fill: #000; stroke: #000; stroke-width: .4px; }
.legend { height: 561px; overflow: hidden; font-size: 13px; letter-spacing: .1px; white-space: nowrap; padding-top: 3px; }
.legend h4 { font-size: 14px; line-height: 18px; color: #000; -webkit-text-stroke: .5px; margin-bottom: 4px; padding-left: .5px; letter-spacing: .15px; }
.legend li { height: 17.550px; line-height: 17.550px; display: flex; align-items: center; gap: 7px; color: #333; }
.legend li::before { content: ""; width: 13px; height: 13px; border-radius: 50%; margin-left: 1.500px; background: var(--c); }
.k0 { --c: #16cc62; } .k1 { --c: #1a6fe8; } .k2 { --c: #e6b417; } .k3 { --c: #ea1a73; } .k4 { --c: #17c5e6; }
.k5 { --c: #116149; } .k6 { --c: #e85d17; } .k7 { --c: #8a25a8; } .k8 { --c: #1494ad; } .k9 { --c: #c1031f; }
.k10 { --c: #73e0a0; } .k11 { --c: #8db6f2; } .k12 { --c: #f0d273; } .k13 { --c: #f277ab; } .k14 { --c: #75ddf0; }
.k15 { --c: #70a091; } .k16 { --c: #f09e74; } .k17 { --c: #bb7ccd; } .k18 { --c: #72bfce; } .k19 { --c: #dc6878; }
.chat { position: absolute; left: 1820px; top: 747px; width: 75px; height: 75px; border-radius: 50%; background: #021e2b; padding: 14px 0 0 14px; box-shadow: 0 2px 14px rgba(0,0,0,.2); }

.taskbar { flex: none; height: 50px; background: #1a2543; display: flex; }
.start { width: 60px; padding: 15px 0 0 20px; }
.search { width: 430px; height: 50px; background: #f1f1f1; border: 1px solid #b5b5b5; display: flex; align-items: center; gap: 13px; padding-left: 14px; font: 17px "Open Sans", sans-serif; letter-spacing: -.1px; color: #222; }
.search span { margin-top: -1px; }
.sys { font-family: "Open Sans", sans-serif; fill: #fff; }
.bdg { font-family: "Open Sans", sans-serif; font-size: 14px; fill: #fff; text-anchor: middle; }
.tm { font-size: 11px; font-weight: bold; }
.dell { font-size: 8px; font-weight: bold; fill: #fff; text-anchor: middle; }
```
